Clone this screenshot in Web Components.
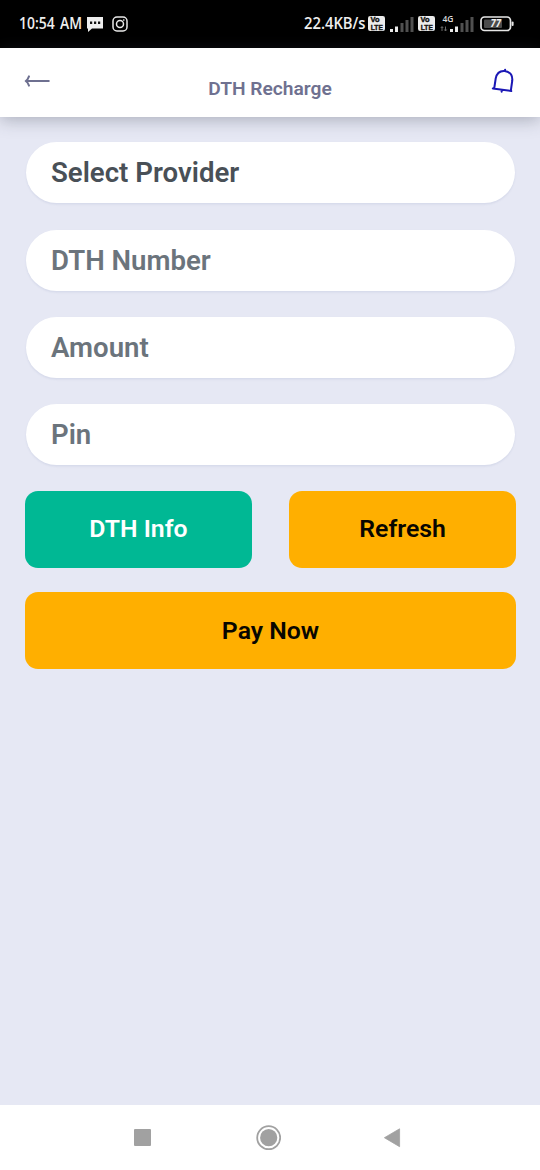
<!DOCTYPE html>
<html lang="en">
<head>
<meta charset="utf-8">
<title>DTH Recharge</title>
<style>
html,body{margin:0;height:100%}
body{font-family:Roboto,"Liberation Sans",sans-serif;background:#e6e8f4}
</style>
</head>
<body>
<recharge-screen></recharge-screen>
<script>
const define=(name,html)=>{
  const t=document.createElement('template');
  t.innerHTML=html;
  customElements.define(name,class extends HTMLElement{
    constructor(){super();this.attachShadow({mode:'open'}).append(t.content.cloneNode(true));}
  });
};

define('signal-bars',`
<style>:host{display:block;width:24px;height:16px}svg{display:block}</style>
<svg width="24" height="16" viewBox="0 0 24 16">
<g fill="#e8e8e8"><rect x="0" y="13" width="3" height="3"/><rect x="5" y="10.5" width="3" height="5.5"/></g>
<g fill="#505050"><rect x="10.5" y="7" width="3" height="9"/><rect x="15.5" y="4" width="3" height="12"/><rect x="20.5" y="1" width="3" height="15"/></g>
</svg>`);

define('volte-badge',`
<style>:host{display:block;width:17px;height:15px}svg{display:block}text{font:900 6.4px "Liberation Sans",sans-serif;fill:#111;stroke:#111;stroke-width:.35}</style>
<svg width="17" height="15" viewBox="0 0 17 15"><rect width="17" height="15" rx="2.2" fill="#ececec"/>
<text x="2.5" y="6.4" textLength="9" lengthAdjust="spacingAndGlyphs">Vo</text>
<text x="2.8" y="13.6" textLength="12" lengthAdjust="spacingAndGlyphs">LTE</text></svg>`);

define('battery-icon',`
<style>:host{display:block;width:35px;height:16px}svg{display:block}text{font:italic bold 10px "Open Sans",sans-serif;fill:#eee}</style>
<svg width="35" height="16" viewBox="0 0 35 16"><rect x="1" y="1" width="29.5" height="13.5" rx="3.5" fill="none" stroke="#e6e6e6" stroke-width="1.7"/>
<rect x="4" y="3.5" width="18" height="8.5" rx="1" fill="#4b4b4b"/><rect x="31.6" y="5.5" width="2" height="4.5" rx="1" fill="#e6e6e6"/>
<text x="10.5" y="11.2" textLength="10.5" lengthAdjust="spacingAndGlyphs">77</text></svg>`);

define('status-bar',`
<style>
:host{display:flex;height:48px;background:#000;padding:0 25px 0 19px;box-sizing:border-box;align-items:flex-start;flex:none}
svg{display:block;flex:none;overflow:visible}
.t{font:600 16.3px "Open Sans",sans-serif;fill:#eee}
.g{font:600 8.5px "Open Sans",sans-serif;fill:#ddd}
.clock{width:64px;height:24px;margin-top:12px}
.chat{margin:16px 0 0 4px}.insta{margin:16px 0 0 8px}
.rate{margin:12px 0 0 175px}
volte-badge{margin:16px 0 0 1px}.s1{margin:16px 0 0 5px}.v2{margin-left:4px}
.net{margin:13px 0 0 5px}.s2{margin:16px 0 0 -2px}
battery-icon{margin:16px 0 0 6px}
signal-bars,volte-badge,battery-icon{flex:none}
</style>
<svg class="clock" viewBox="0 0 64 24"><text class="t" x="0" y="17" textLength="63" word-spacing="2" lengthAdjust="spacingAndGlyphs">10:54 AM</text></svg>
<svg class="chat" width="17" height="16" viewBox="0 0 17 16"><path d="M0 1H16V12.5H5L1 16V12.5H0Z" fill="#eee"/><path d="M3 5.5h2.2v2.5H3zM7 5.5h2.2v2.5H7zM11 5.5h2.2v2.5H11z" fill="#111"/></svg>
<svg class="insta" width="16" height="16" viewBox="0 0 16 16" fill="none" stroke="#e8e8e8" stroke-width="1.5"><rect x="1" y="1" width="14" height="14" rx="4"/><circle cx="8" cy="8" r="3.5"/><circle cx="11.8" cy="4" r=".5" fill="#e8e8e8" stroke-width=".7"/></svg>
<svg class="rate" width="64" height="24" viewBox="0 0 64 24"><text class="t" x="1" y="17" textLength="61.5" lengthAdjust="spacingAndGlyphs">22.4KB/s</text></svg>
<volte-badge></volte-badge><signal-bars class="s1"></signal-bars><volte-badge class="v2"></volte-badge>
<svg class="net" width="12" height="20" viewBox="0 0 12 20"><text class="g" x="2.5" y="8.5" textLength="11" lengthAdjust="spacingAndGlyphs">4G</text><path d="M2 18v-4M.8 15L2 13.5 3.2 15M5.5 13.5v4M4.3 16.5l1.2 1.5 1.2-1.5" fill="none" stroke="#777" stroke-width=".9"/></svg>
<signal-bars class="s2"></signal-bars><battery-icon></battery-icon>`);

define('app-header',`
<style>
:host{display:grid;grid-template-columns:50px 1fr 50px;height:69px;background:#fff;box-shadow:0 3px 16px rgba(60,65,80,.34);flex:none;z-index:1}
svg{display:block}
.back{margin:25px 0 0 24px}
.bell{margin:19px 0 0 0}
h1{margin:29px 0 0;text-align:center;font-size:19.2px;line-height:24px;font-weight:600;color:#6f7190}
</style>
<svg class="back" width="26" height="16" viewBox="0 0 26 16" fill="none" stroke="#6e7090" stroke-width="2" stroke-linecap="round" stroke-linejoin="round"><path d="M5 3.4Q3.8 6.8 1.7 8Q3.8 9.2 5 12.6M2 8H24.8"/></svg>
<h1><slot></slot></h1>
<svg class="bell" width="26" height="28" viewBox="0 0 26 28" fill="none" stroke="#1b18b5" stroke-width="2" stroke-linecap="round" stroke-linejoin="round"><path d="M2.8 21.5L21.3 24M4.2 21.5L5.7 11.5C6.8 6 10 3.7 14.7 4.1C20 4.8 22.8 8.5 22.2 14L20.8 23.8M14.9 3.7L15.1 2.8M11.4 23.1L11.7 24.7"/></svg>`);

define('form-field',`
<style>
:host{display:flex;align-items:center;height:61px;border-radius:31px;background:#fff;padding:0 25px;margin:0 1px;box-sizing:border-box;box-shadow:0 1.5px 2px rgba(110,120,170,.13);font-size:27.6px;font-weight:600;color:var(--ink,#6b747c)}
span{line-height:32px;margin-top:1px}
</style><span><slot></slot></span>`);

define('action-button',`
<style>
:host{display:block}
button{display:block;width:100%;height:77px;border:0;border-radius:13px;padding:0;background:var(--fill,#ffaf00);color:var(--ink,#080600);font:600 24.8px/30px Roboto,"Liberation Sans",sans-serif}
</style><button><slot></slot></button>`);

define('nav-bar',`
<style>
:host{display:flex;height:65px;background:#fff;flex:none;box-sizing:border-box;padding:19px 138px 0 134px;justify-content:space-between;align-items:flex-start}
svg{display:block}
</style>
<svg width="17" height="26" viewBox="0 0 17 26"><rect x="0" y="5" width="17" height="17" rx="1" fill="#a1a1a1"/></svg>
<svg width="26" height="28" viewBox="0 0 26 28"><circle cx="13.7" cy="13.7" r="11.5" fill="none" stroke="#a1a1a1" stroke-width="1.8"/><circle cx="13.7" cy="13.7" r="8.6" fill="#a1a1a1"/></svg>
<svg width="18" height="28" viewBox="0 0 18 28"><path d="M.4 13.7L15.6 4.8V22.7Z" fill="#a1a1a1" stroke="#a1a1a1" stroke-linejoin="round" stroke-width=".8"/></svg>`);

define('recharge-screen',`
<style>
:host{display:flex;flex-direction:column;height:1170px;width:540px;background:#e6e8f4;overflow:hidden}
main{flex:1;padding:25.3px 24px 0 25px}
.fields{display:grid;gap:26.4px}
.row{display:grid;grid-template-columns:1fr 1fr;gap:37.5px;margin:25.2px 0 24.6px}
.dark{--ink:#495057}.green{--fill:#00b894;--ink:#fff}
</style>
<status-bar></status-bar>
<app-header>DTH Recharge</app-header>
<main>
<div class="fields"><form-field class="dark">Select Provider</form-field><form-field>DTH Number</form-field><form-field>Amount</form-field><form-field>Pin</form-field></div>
<div class="row"><action-button class="green">DTH Info</action-button><action-button>Refresh</action-button></div>
<action-button>Pay Now</action-button>
</main>
<nav-bar></nav-bar>`);
</script>
</body>
</html>
